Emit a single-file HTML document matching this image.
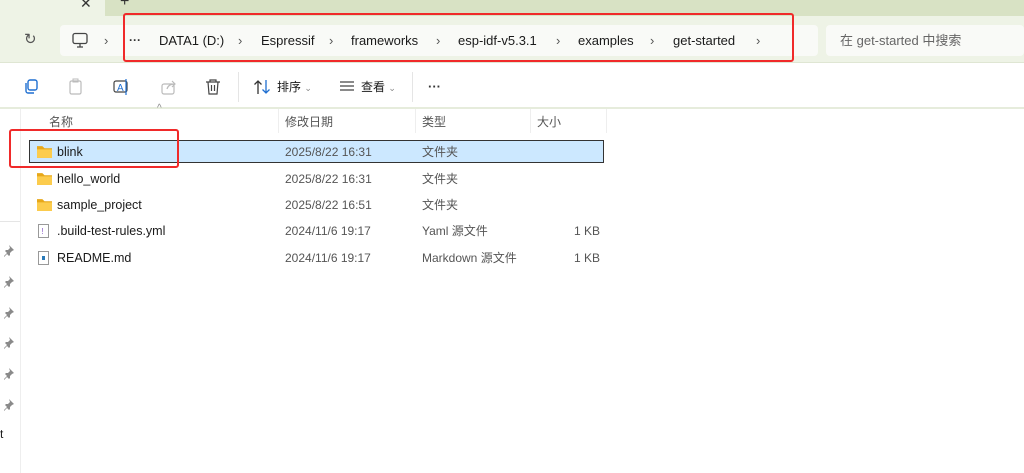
<!DOCTYPE html>
<html><head><meta charset="utf-8"><style>
*{margin:0;padding:0;box-sizing:border-box}
body{width:1024px;height:473px;overflow:hidden;background:#fff;font-family:"Liberation Sans","Noto Sans CJK SC",sans-serif;font-size:12px;color:#1a1a1a;position:relative;line-height:16px}
.a{position:absolute;white-space:nowrap}
.g{color:#555}
.c{color:#555;font-size:13px}
</style></head><body>
<div class="a" style="left:0;top:0;width:1024px;height:16px;background:#d8e2c4"></div>
<div class="a" style="left:0;top:0;width:105px;height:16px;background:#eef3e6"></div>
<div class="a" style="left:80px;top:-5px;font-size:14px;color:#333">✕</div>
<div class="a" style="left:120px;top:-6px;font-size:16px;color:#333">+</div>
<div class="a" style="left:0;top:16px;width:1024px;height:47px;background:#eef3e6;border-bottom:1px solid #dfe6d3"></div>
<div class="a" style="left:24px;top:32px;font-size:15px;color:#555">↻</div>
<div class="a" style="left:60px;top:25px;width:758px;height:31px;background:#f9faf7;border-radius:4px"></div>
<div class="a" style="left:826px;top:25px;width:198px;height:31px;background:#f9faf7;border-radius:4px"></div>
<svg class="a" style="left:71px;top:32px" width="18" height="17"><rect x="2" y="1.5" width="14" height="10" rx="2" fill="none" stroke="#444" stroke-width="1.3"/><path d="M6 15h6M9 12v3" stroke="#444" stroke-width="1.3"/></svg>
<div class="a c" style="left:104px;top:33px">›</div>
<div class="a" style="left:129px;top:32px;font-weight:bold;color:#333">···</div>
<div class="a" style="left:159px;top:33px;font-size:13px">DATA1 (D:)</div>
<div class="a c" style="left:238px;top:33px">›</div>
<div class="a" style="left:261px;top:33px;font-size:13px">Espressif</div>
<div class="a c" style="left:329px;top:33px">›</div>
<div class="a" style="left:351px;top:33px;font-size:13px">frameworks</div>
<div class="a c" style="left:436px;top:33px">›</div>
<div class="a" style="left:458px;top:33px;font-size:13px">esp-idf-v5.3.1</div>
<div class="a c" style="left:556px;top:33px">›</div>
<div class="a" style="left:578px;top:33px;font-size:13px">examples</div>
<div class="a c" style="left:650px;top:33px">›</div>
<div class="a" style="left:673px;top:33px;font-size:13px">get-started</div>
<div class="a c" style="left:756px;top:33px">›</div>
<div class="a" style="left:840px;top:33px;font-size:13px;color:#666">在 get-started 中搜索</div>
<div class="a" style="left:123px;top:13px;width:671px;height:49px;border:2px solid #f02a2a;border-radius:3px"></div>
<!-- toolbar -->
<svg class="a" style="left:22px;top:78px" width="18" height="18"><rect x="6" y="2" width="9" height="10" rx="2" fill="none" stroke="#1f6fd1" stroke-width="1.4"/><path d="M4 5v8a2 2 0 0 0 2 2h6" fill="none" stroke="#1f6fd1" stroke-width="1.4"/></svg>
<svg class="a" style="left:67px;top:78px" width="18" height="18"><rect x="3" y="3" width="11" height="13" rx="1.5" fill="none" stroke="#bbb" stroke-width="1.2"/><rect x="6" y="1" width="5" height="3" fill="none" stroke="#bbb"/></svg>
<svg class="a" style="left:112px;top:78px" width="20" height="18"><rect x="2" y="3" width="13" height="11" rx="2" fill="none" stroke="#444" stroke-width="1.2"/><text x="5" y="13" font-size="10" fill="#1f6fd1" font-family="Liberation Sans">A</text><path d="M14 1v16" stroke="#1f6fd1" stroke-width="1.2"/></svg>
<svg class="a" style="left:160px;top:78px" width="18" height="18"><rect x="2" y="6" width="12" height="10" rx="2" fill="none" stroke="#bbb" stroke-width="1.2"/><path d="M7 11c1-4 4-5 8-5M12 3l3 3-3 3" fill="none" stroke="#bbb" stroke-width="1.2"/></svg>
<svg class="a" style="left:205px;top:78px" width="16" height="18"><path d="M1 4h14M5 4V2h6v2M3 4l1 12h8l1-12M6.5 7v6M9.5 7v6" fill="none" stroke="#444" stroke-width="1.2"/></svg>
<div class="a" style="left:238px;top:72px;width:1px;height:30px;background:#e5e5e5"></div>
<svg class="a" style="left:253px;top:78px" width="20" height="18"><path d="M5 16V3M1.5 6.5L5 3l3.5 3.5" fill="none" stroke="#333" stroke-width="1.3"/><path d="M13 2v13M9.5 11.5L13 15l3.5-3.5" fill="none" stroke="#1f6fd1" stroke-width="1.3"/></svg>
<div class="a" style="left:277px;top:79px">排序 <span style="font-size:9px;color:#888">⌄</span></div>
<svg class="a" style="left:339px;top:80px" width="16" height="14"><path d="M1 2h14M1 6h14M1 10h14" stroke="#444" stroke-width="1.2"/></svg>
<div class="a" style="left:361px;top:79px">查看 <span style="font-size:9px;color:#888">⌄</span></div>
<div class="a" style="left:412px;top:72px;width:1px;height:30px;background:#e5e5e5"></div>
<div class="a" style="left:428px;top:79px;font-weight:bold;font-size:13px;color:#333">···</div>
<div class="a" style="left:0;top:107px;width:1024px;height:2px;background:#e6ecdc"></div>
<!-- left panel -->
<div class="a" style="left:20px;top:109px;width:1px;height:364px;background:#eee"></div>
<div class="a" style="left:0;top:221px;width:20px;height:1px;background:#e5e5e5"></div>
<svg class="a" style="left:3px;top:244px" width="14" height="170">
<defs><g id="p"><path d="M6 1l5 5-2 1-2 2 0 2-1 1-2-2-3 3-0-1 3-3-2-2 1-1 2 0 2-2z" fill="#8a8a8a"/></g></defs>
<use href="#p" y="0"/><use href="#p" y="31"/><use href="#p" y="62"/><use href="#p" y="92"/><use href="#p" y="123"/><use href="#p" y="154"/>
</svg>
<div class="a" style="left:0;top:426px;font-size:12px">t</div>
<!-- header -->
<div class="a" style="left:157px;top:101px;font-size:10px;color:#888">^</div>
<div class="a g" style="left:49px;top:114px">名称</div>
<div class="a g" style="left:285px;top:114px">修改日期</div>
<div class="a g" style="left:422px;top:114px">类型</div>
<div class="a g" style="left:537px;top:114px">大小</div>
<div class="a" style="left:278px;top:109px;width:1px;height:24px;background:#eee"></div>
<div class="a" style="left:415px;top:109px;width:1px;height:24px;background:#eee"></div>
<div class="a" style="left:530px;top:109px;width:1px;height:24px;background:#eee"></div>
<div class="a" style="left:606px;top:109px;width:1px;height:24px;background:#eee"></div>
<!-- rows -->
<div class="a" style="left:29px;top:140px;width:575px;height:23px;background:#cce8ff;border:1px solid #333"></div>
<svg width="0" height="0" style="position:absolute"><defs><symbol id="f" viewBox="0 0 14 12"><path d="M0 1h5l2 2h7v9H0z" fill="#e7a81a"/><path d="M0 4h14v8H0z" fill="#fccc4d"/></symbol></defs></svg>
<svg class="a" style="left:37px;top:145px" width="15" height="13"><use href="#f"/></svg>
<svg class="a" style="left:37px;top:172px" width="15" height="13"><use href="#f"/></svg>
<svg class="a" style="left:37px;top:198px" width="15" height="13"><use href="#f"/></svg>
<svg class="a" style="left:38px;top:224px" width="12" height="14"><rect x=".5" y=".5" width="10" height="13" fill="#fff" stroke="#999"/><text x="3.5" y="10" font-size="8" fill="#8a5cc7">!</text></svg>
<svg class="a" style="left:38px;top:251px" width="12" height="14"><rect x=".5" y=".5" width="10" height="13" fill="#fff" stroke="#999"/><rect x="4" y="5" width="3" height="4" fill="#2a7ab8"/></svg>
<div class="a" style="left:57px;top:144px;font-size:12.5px">blink</div>
<div class="a" style="left:57px;top:171px;font-size:12.5px">hello_world</div>
<div class="a" style="left:57px;top:197px;font-size:12.5px">sample_project</div>
<div class="a" style="left:57px;top:223px;font-size:12.5px">.build-test-rules.yml</div>
<div class="a" style="left:57px;top:250px;font-size:12.5px">README.md</div>
<div class="a g" style="left:285px;top:144px">2025/8/22 16:31</div>
<div class="a g" style="left:285px;top:171px">2025/8/22 16:31</div>
<div class="a g" style="left:285px;top:197px">2025/8/22 16:51</div>
<div class="a g" style="left:285px;top:223px">2024/11/6 19:17</div>
<div class="a g" style="left:285px;top:250px">2024/11/6 19:17</div>
<div class="a g" style="left:422px;top:144px">文件夹</div>
<div class="a g" style="left:422px;top:171px">文件夹</div>
<div class="a g" style="left:422px;top:197px">文件夹</div>
<div class="a g" style="left:422px;top:223px">Yaml 源文件</div>
<div class="a g" style="left:422px;top:250px">Markdown 源文件</div>
<div class="a g" style="left:574px;top:223px">1 KB</div>
<div class="a g" style="left:574px;top:250px">1 KB</div>
<div class="a" style="left:9px;top:129px;width:170px;height:39px;border:2px solid #f02a2a;border-radius:3px"></div>
</body></html>
